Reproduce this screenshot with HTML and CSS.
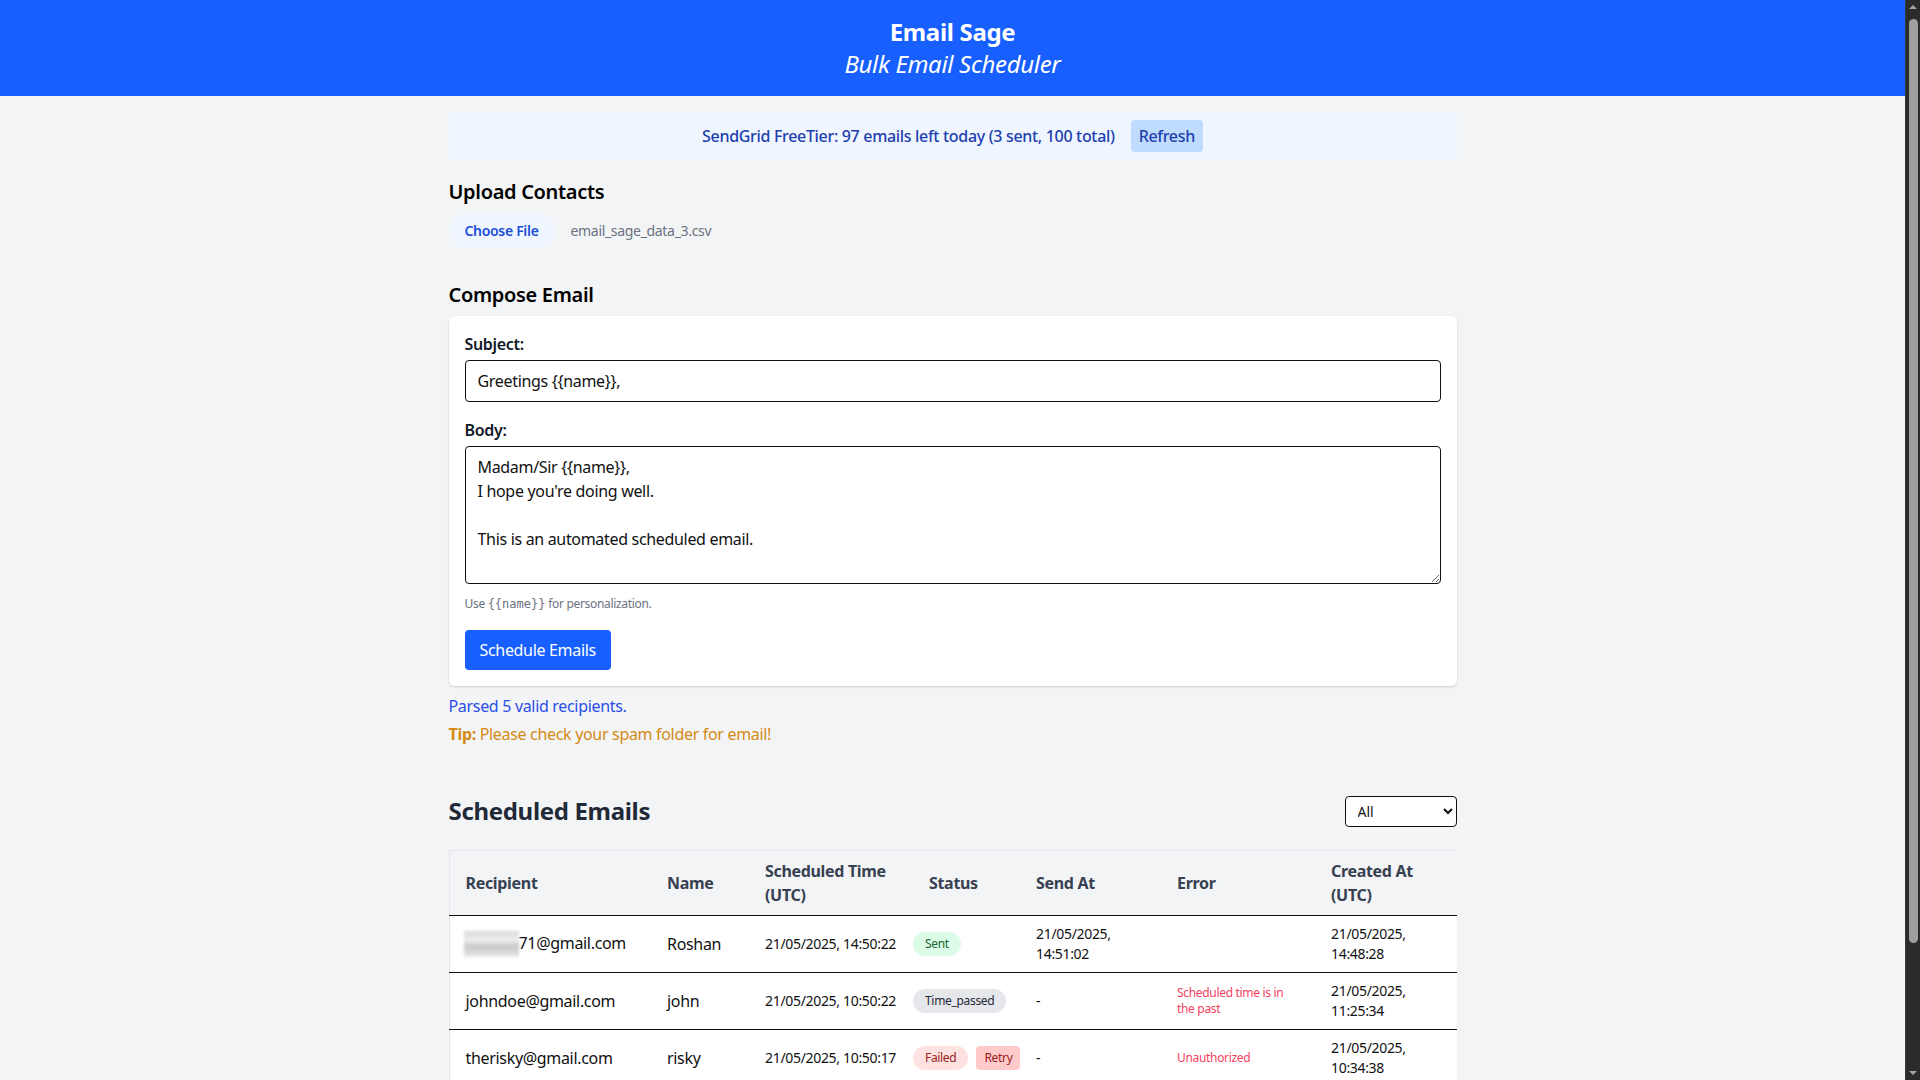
FILE: index.html
```html
<!DOCTYPE html>
<html lang="en">
<head>
<meta charset="utf-8">
<title>Email Sage</title>
<link rel="stylesheet" href="styles.css">
</head>
<body>
<div class="fake-scrollbar" aria-hidden="true">
  <span class="sb-arrow sb-up"></span>
  <span class="sb-thumb"></span>
  <span class="sb-arrow sb-down"></span>
</div>
<header class="app-header">
  <h1 class="app-title">Email Sage</h1>
  <p class="app-subtitle">Bulk Email Scheduler</p>
</header>
<main class="container">
  <div class="quota">
    <span class="quota-text">SendGrid FreeTier: 97 emails left today (3 sent, 100 total)</span>
    <button class="quota-btn">Refresh</button>
  </div>

  <section class="upload">
    <h2 class="section-title">Upload Contacts</h2>
    <div class="file-row">
      <span class="file-btn">Choose File</span>
      <span class="file-name">email_sage_data_3.csv</span>
    </div>
  </section>

  <section class="compose">
    <h2 class="section-title compose-title">Compose Email</h2>
    <div class="card">
      <div class="field">
        <label class="field-label">Subject:</label>
        <input class="text-input" type="text" value="Greetings {{name}},">
      </div>
      <div class="field field-last">
        <label class="field-label">Body:</label>
        <textarea class="text-area">Madam/Sir {{name}},
I hope you're doing well.

This is an automated scheduled email.</textarea>
      </div>
      <p class="hint">Use <code class="hint-code">{{name}}</code> for personalization.</p>
      <button class="primary-btn">Schedule Emails</button>
    </div>
    <p class="parsed">Parsed 5 valid recipients.</p>
    <p class="tip"><strong class="tip-label">Tip:</strong> Please check your spam folder for email!</p>
  </section>

  <section class="scheduled">
    <div class="scheduled-head">
      <h2 class="scheduled-title">Scheduled Emails</h2>
      <select class="filter">
        <option>All</option>
        <option>Sent</option>
        <option>Failed</option>
        <option>Pending</option>
      </select>
    </div>
    <div class="table-wrap">
      <table class="email-table">
        <colgroup>
          <col class="c-recipient">
          <col class="c-name">
          <col class="c-time">
          <col class="c-status">
          <col class="c-send">
          <col class="c-error">
          <col class="c-created">
        </colgroup>
        <thead>
          <tr>
            <th>Recipient</th>
            <th>Name</th>
            <th>Scheduled Time<br>(UTC)</th>
            <th class="th-status">Status</th>
            <th>Send At</th>
            <th>Error</th>
            <th>Created At<br>(UTC)</th>
          </tr>
        </thead>
        <tbody>
          <tr>
            <td class="td-big"><span class="blurred"></span>71@gmail.com</td>
            <td class="td-big">Roshan</td>
            <td>21/05/2025, 14:50:22</td>
            <td class="td-status"><span class="badge badge-sent">Sent</span></td>
            <td>21/05/2025,<br>14:51:02</td>
            <td class="td-error"></td>
            <td>21/05/2025,<br>14:48:28</td>
          </tr>
          <tr>
            <td class="td-big">johndoe@gmail.com</td>
            <td class="td-big">john</td>
            <td>21/05/2025, 10:50:22</td>
            <td class="td-status"><span class="badge badge-passed">Time_passed</span></td>
            <td>-</td>
            <td class="td-error">Scheduled time is in the past</td>
            <td>21/05/2025,<br>11:25:34</td>
          </tr>
          <tr>
            <td class="td-big">therisky@gmail.com</td>
            <td class="td-big">risky</td>
            <td>21/05/2025, 10:50:17</td>
            <td class="td-status"><span class="badge badge-failed">Failed</span><button class="retry-btn">Retry</button></td>
            <td>-</td>
            <td class="td-error">Unauthorized</td>
            <td>21/05/2025,<br>10:34:38</td>
          </tr>
          <tr>
            <td class="td-big">janedoe@gmail.com</td>
            <td class="td-big">jane</td>
            <td>21/05/2025, 10:30:05</td>
            <td class="td-status"><span class="badge badge-sent">Sent</span></td>
            <td>21/05/2025,<br>10:31:12</td>
            <td class="td-error"></td>
            <td>21/05/2025,<br>10:28:47</td>
          </tr>
          <tr>
            <td class="td-big">sagetest@gmail.com</td>
            <td class="td-big">sage</td>
            <td>21/05/2025, 10:20:41</td>
            <td class="td-status"><span class="badge badge-sent">Sent</span></td>
            <td>21/05/2025,<br>10:21:30</td>
            <td class="td-error"></td>
            <td>21/05/2025,<br>10:18:09</td>
          </tr>
        </tbody>
      </table>
    </div>
  </section>
</main>
</body>
</html>
```
FILE: styles.css
```css
html {
  background: #f3f4f6;
}
body {
  margin: 0;
  padding-right: 15px;
  background: #f3f4f6;
  font-family: "Segoe UI", "Noto Sans", "Open Sans", sans-serif;
  letter-spacing: -0.02em;
  color: #111827;
  font-size: 16px;
  line-height: 24px;
}

/* drawn scrollbar, overlaying the right edge like the browser's own */
.fake-scrollbar {
  position: fixed;
  top: 0;
  right: 0;
  width: 15px;
  height: 100vh;
  box-sizing: border-box;
  background: #2b2b2b;
  border-left: 1px solid #3a3a3a;
  display: flex;
  flex-direction: column;
  align-items: center;
  z-index: 10;
}
.sb-arrow {
  width: 0;
  height: 0;
  border-left: 4px solid transparent;
  border-right: 4px solid transparent;
}
.sb-up {
  margin-top: 5px;
  border-bottom: 4px solid #a3a3a3;
}
.sb-down {
  margin-top: auto;
  margin-bottom: 5px;
  border-top: 4px solid #a3a3a3;
}
.sb-thumb {
  margin-top: 10px;
  width: 9px;
  height: 924px;
  border-radius: 5px;
  background: #9f9f9f;
}

.app-header {
  background: #175ffe;
  color: #ffffff;
  text-align: center;
  padding: 16px;
}
.app-title {
  margin: 0;
  font-size: 24px;
  line-height: 32px;
  font-weight: 700;
}
.app-subtitle {
  margin: 0;
  font-size: 24px;
  line-height: 32px;
  font-style: italic;
}

.container {
  max-width: 1024px;
  margin: 0 auto;
  padding: 16px 8px 25px;
  box-sizing: border-box;
}

.quota {
  display: flex;
  justify-content: center;
  align-items: center;
  gap: 16px;
  background: #eff6ff;
  border-radius: 4px;
  padding: 8px;
}
.quota-text {
  color: #1e40af;
  font-weight: 500;
}
.quota-btn {
  font-family: inherit;
  letter-spacing: inherit;
  font-size: 16px;
  line-height: 24px;
  font-weight: 500;
  color: #1e40af;
  background: #bfdbfe;
  border: none;
  border-radius: 4px;
  padding: 4px 8px;
}

.upload {
  margin-top: 18px;
}
.section-title {
  margin: 0 0 8px;
  font-size: 20px;
  line-height: 28px;
  font-weight: 600;
  color: #000000;
}
.file-row {
  display: flex;
  align-items: center;
}
.file-btn {
  display: inline-block;
  padding: 7px 16px;
  border-radius: 9999px;
  background: #eff6ff;
  color: #1d4ed8;
  font-size: 14px;
  line-height: 20px;
  font-weight: 600;
  margin-right: 16px;
}
.file-name {
  font-size: 14px;
  line-height: 20px;
  color: #6b7280;
}

.compose {
  margin-top: 33px;
}
.compose-title {
  margin-bottom: 7px;
}
.card {
  background: #ffffff;
  border-radius: 6px;
  box-shadow: 0 1px 3px rgba(0, 0, 0, 0.1), 0 1px 2px rgba(0, 0, 0, 0.06);
  padding: 16px;
}
.field {
  margin-bottom: 16px;
}
.field-last {
  margin-bottom: 0;
}
.field-label {
  display: block;
  font-weight: 600;
  margin-bottom: 4px;
}
.text-input,
.text-area {
  display: block;
  width: 100%;
  box-sizing: border-box;
  border: 1px solid #111111;
  border-radius: 4px;
  padding: 8px 12px;
  font-family: inherit;
  letter-spacing: inherit;
  font-size: 16px;
  line-height: 24px;
  color: #111111;
  background: #ffffff;
}
.text-area {
  height: 138px;
  resize: vertical;
}
.hint {
  margin: 12px 0 18px;
  font-size: 12px;
  line-height: 16px;
  color: #6b7280;
}
.hint-code {
  font-family: "DejaVu Sans Mono", "Liberation Mono", monospace;
  font-size: 12px;
  letter-spacing: 0;
}
.primary-btn {
  display: block;
  font-family: inherit;
  letter-spacing: inherit;
  font-size: 16px;
  line-height: 24px;
  color: #ffffff;
  background: #175ffe;
  border: none;
  border-radius: 4px;
  padding: 8px 15px;
}
.parsed {
  margin: 8px 0 0;
  color: #2a4ee8;
}
.tip {
  margin: 4px 0 0;
  color: #d48a14;
}
.tip-label {
  font-weight: 700;
}

.scheduled {
  margin-top: 49px;
}
.scheduled-head {
  display: flex;
  justify-content: space-between;
  align-items: center;
  margin-bottom: 23px;
}
.scheduled-title {
  margin: 0;
  font-size: 24px;
  line-height: 32px;
  font-weight: 700;
  color: #1f2937;
}
.filter {
  width: 112px;
  height: 31px;
  border: 1px solid #111111;
  border-radius: 4px;
  padding: 4px 8px;
  font-family: inherit;
  font-size: 14px;
  background: #ffffff;
  color: #111111;
}

.table-wrap {
  overflow-x: auto;
}
.email-table {
  width: 100%;
  table-layout: fixed;
  border-collapse: collapse;
  background: #ffffff;
  border: 1px solid #e5e7eb;
}
.c-recipient { width: 202px; }
.c-name { width: 98px; }
.c-time { width: 156px; }
.c-status { width: 115px; }
.c-send { width: 141px; }
.c-error { width: 154px; }
.c-created { width: 142px; }

.email-table thead {
  background: #f3f4f6;
}
.email-table th {
  text-align: left;
  font-size: 16px;
  line-height: 24px;
  font-weight: 700;
  color: #374151;
  padding: 8px 16px;
  border-bottom: 1px solid #111111;
  white-space: nowrap;
  vertical-align: middle;
}
.email-table th.th-status {
  padding-left: 24px;
}
.email-table td {
  padding: 8px 16px;
  font-size: 14px;
  line-height: 20px;
  color: #111111;
  border-bottom: 1px solid #111111;
  vertical-align: middle;
  white-space: nowrap;
}
.email-table td.td-big {
  font-size: 16px;
  line-height: 24px;
}
.email-table td.td-status {
  padding-left: 8px;
  padding-right: 0;
}
.email-table td.td-error {
  font-size: 12px;
  line-height: 16px;
  color: #f43f5e;
  white-space: normal;
}
.blurred {
  display: inline-block;
  width: 55px;
  height: 26px;
  vertical-align: middle;
  margin-left: -2px;
  background: linear-gradient(180deg, #d9d9d9 0%, #eeeeee 35%, #c8c8c8 60%, #e8e8e8 100%);
  filter: blur(1.5px);
}
.badge {
  display: inline-block;
  font-size: 12px;
  line-height: 16px;
  padding: 4px 12px;
  border-radius: 9999px;
  vertical-align: middle;
}
.badge-sent {
  background: #dcfce7;
  color: #166534;
}
.badge-passed {
  background: #e5e7eb;
  color: #1f2937;
}
.badge-failed {
  background: #fee2e2;
  color: #991b1b;
}
.retry-btn {
  font-family: inherit;
  letter-spacing: inherit;
  font-size: 12px;
  line-height: 16px;
  padding: 4px 8px;
  margin-left: 8px;
  border: none;
  border-radius: 4px;
  background: #fecaca;
  color: #991b1b;
  vertical-align: middle;
}
```
